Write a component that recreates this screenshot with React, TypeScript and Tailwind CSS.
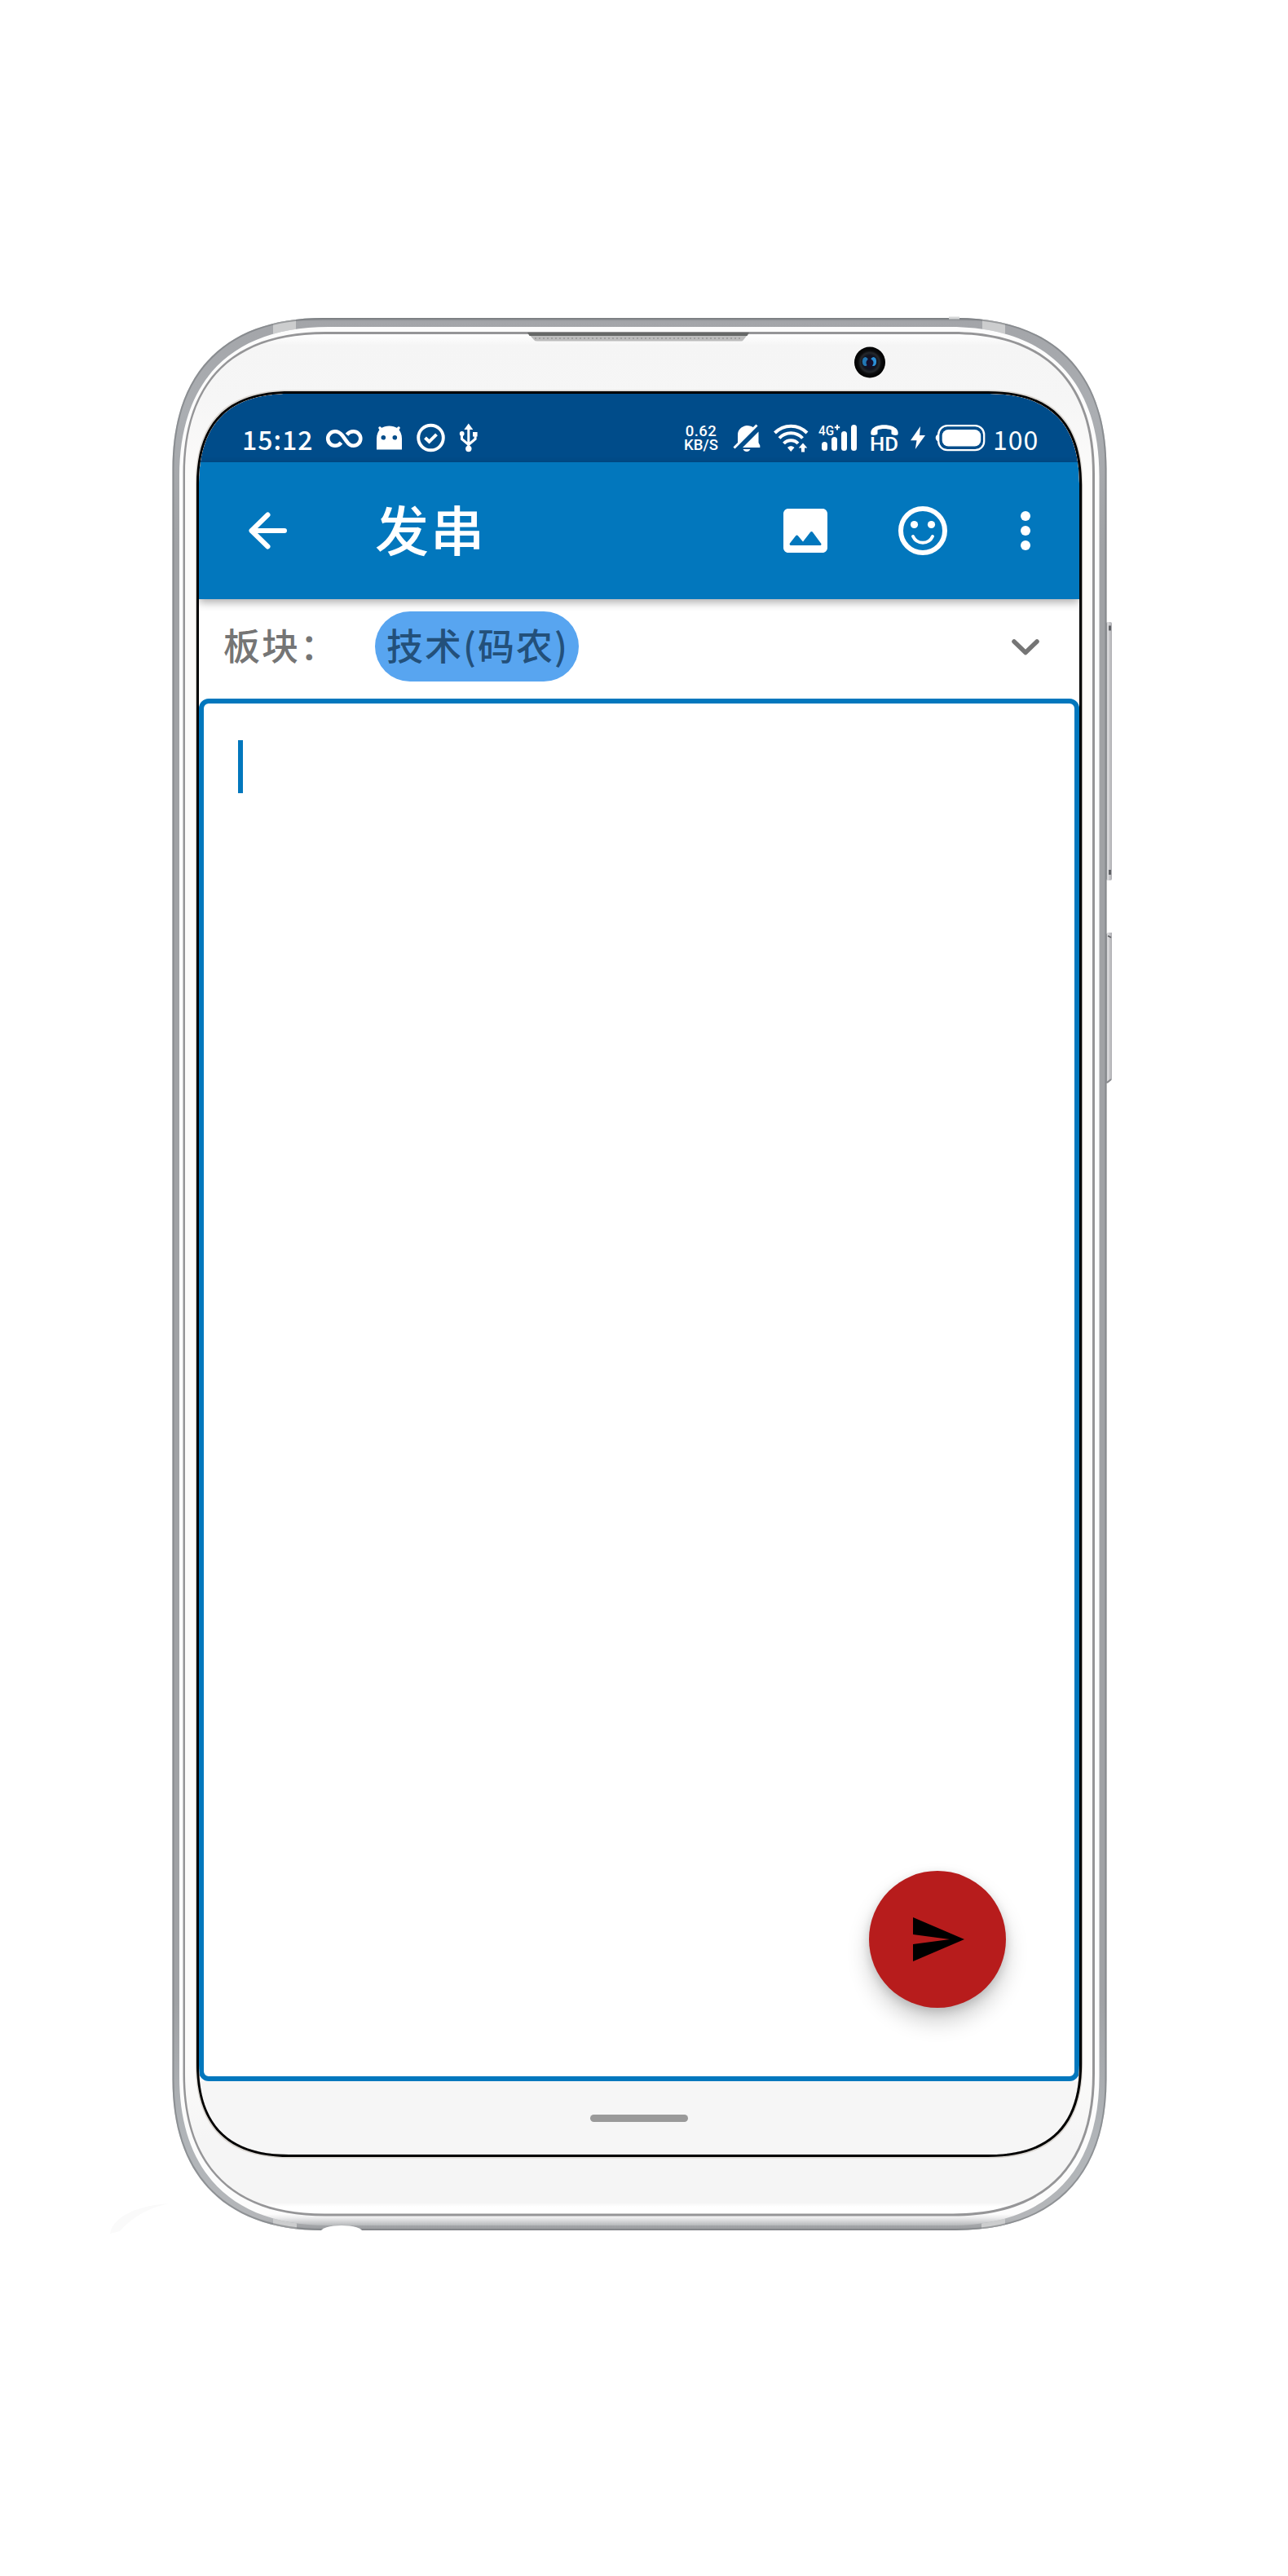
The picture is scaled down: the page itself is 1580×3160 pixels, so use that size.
import React from "react";

const cjk = "font-['Noto_Sans_CJK_SC',sans-serif]";

/** Closed rectangle with smooth (continuous-curvature) corners. */
function squircle(x0: number, y0: number, x1: number, y1: number, r: number, k: number) {
  const c = r * (1 - k);
  return (
    `M${x0} ${y0 + r}C${x0} ${y0 + c} ${x0 + c} ${y0} ${x0 + r} ${y0}` +
    `H${x1 - r}C${x1 - c} ${y0} ${x1} ${y0 + c} ${x1} ${y0 + r}` +
    `V${y1 - r}C${x1} ${y1 - c} ${x1 - c} ${y1} ${x1 - r} ${y1}` +
    `H${x0 + r}C${x0 + c} ${y1} ${x0} ${y1 - c} ${x0} ${y1 - r}Z`
  );
}

const OUTER = squircle(211.5, 390, 1357.5, 2736, 185, 0.645);
const RIM = squircle(220, 401, 1348.5, 2730, 183, 0.645);
const LINE = squircle(224.5, 407, 1343, 2718.5, 175, 0.655);
const FACE = squircle(227, 410, 1340, 2715.5, 171, 0.655);
const GLASS = squircle(239.8, 478.5, 1328.2, 2647.5, 115, 0.67);
const BEZEL = squircle(241, 480, 1327.2, 2646, 115, 0.67);
const SCREEN = squircle(244, 483, 1324, 2643, 110, 0.665);

function PhoneFrame() {
  return (
    <svg className="pointer-events-none absolute inset-0" width="1580" height="3160" viewBox="0 0 1580 3160" aria-hidden="true">
      <defs>
        <linearGradient id="metal" gradientUnits="userSpaceOnUse" x1="0" y1="390" x2="0" y2="2736">
          <stop offset="0" stopColor="#7f8387" />
          <stop offset="0.0018" stopColor="#a3a5a9" />
          <stop offset="0.05" stopColor="#abaeb2" />
          <stop offset="0.12" stopColor="#a0a2a5" />
          <stop offset="0.88" stopColor="#a0a2a5" />
          <stop offset="0.95" stopColor="#b0b4b8" />
          <stop offset="0.994" stopColor="#b4b6b9" />
          <stop offset="1" stopColor="#97999c" />
        </linearGradient>
        <linearGradient id="rim" gradientUnits="userSpaceOnUse" x1="0" y1="2716" x2="0" y2="2730">
          <stop offset="0" stopColor="#fcfcfc" />
          <stop offset="0.35" stopColor="#ebebec" />
          <stop offset="1" stopColor="#b6b8ba" />
        </linearGradient>
        <linearGradient id="face" gradientUnits="userSpaceOnUse" x1="0" y1="410" x2="0" y2="2716">
          <stop offset="0" stopColor="#ffffff" />
          <stop offset="0.006" stopColor="#f5f5f5" />
          <stop offset="0.035" stopColor="#f6f6f6" />
          <stop offset="0.08" stopColor="#fcfbfa" />
          <stop offset="0.92" stopColor="#fcfbfa" />
          <stop offset="0.96" stopColor="#f5f5f5" />
          <stop offset="0.994" stopColor="#f5f5f5" />
          <stop offset="0.996" stopColor="#ffffff" />
          <stop offset="1" stopColor="#ffffff" />
        </linearGradient>
        <linearGradient id="key" x1="0" y1="0" x2="1" y2="0">
          <stop offset="0" stopColor="#77797d" />
          <stop offset="0.25" stopColor="#e4e4e6" />
          <stop offset="0.6" stopColor="#c3c3c6" />
          <stop offset="1" stopColor="#b0b0b4" />
        </linearGradient>
        <radialGradient id="lens">
          <stop offset="0" stopColor="#150f2c" />
          <stop offset="0.45" stopColor="#10131f" />
          <stop offset="0.62" stopColor="#25282c" />
          <stop offset="0.75" stopColor="#0b0c0e" />
          <stop offset="1" stopColor="#000000" />
        </radialGradient>
        <clipPath id="metalClip">
          <path d={OUTER + RIM} clipRule="evenodd" />
        </clipPath>
      </defs>

      {/* side keys */}
      <rect x="1357" y="763" width="7" height="317" rx="2" fill="url(#key)" />
      <path d="M1360 767.500h3v6h-3zM1360 1067h3v6h-3z" fill="#606266" />
      <path d="M1357 1146l2-2h5v180l-5 5h-2z" fill="url(#key)" />
      <path d="M1359 1148l4 2" stroke="#5c5e62" strokeWidth="1.500" />
      <path d="M1358 1328l5-4" stroke="#88898c" strokeWidth="2" />

      {/* metal body with antenna bands */}
      <path d={OUTER + SCREEN} fillRule="evenodd" fill="url(#metal)" />
      <g clipPath="url(#metalClip)">
        <path d="M335 385h28v40h-28zM1205 385h28v40h-28zM335 2700h29v40h-29zM1204 2700h29v40h-29z" fill="#cccdce" />
        <path d={OUTER} fill="none" stroke="#77797d" strokeWidth="4" opacity="0.6" />
      </g>
      <path d={RIM + SCREEN} fillRule="evenodd" fill="url(#rim)" />
      <path d={LINE + SCREEN} fillRule="evenodd" fill="#959597" />
      <path d={FACE + SCREEN} fillRule="evenodd" fill="url(#face)" />
      <path d={GLASS + SCREEN} fillRule="evenodd" fill="#d9d5d0" />
      <path d={BEZEL + SCREEN} fillRule="evenodd" fill="#000" />
      <path d="M1164 388.500h13v3h-13z" fill="#d5d6d7" />
      <ellipse cx="419" cy="2738" rx="26" ry="8" fill="#fff" />
      <path d="M135 2740c4-20 30-34 72-37-26 6-44 16-60 34z" fill="#fafafa" />

      {/* earpiece */}
      <path d="M647 408H919L912 417Q911 418.500 909 418.500H659Q656 418.500 655 417Z" fill="#bdbdbd" />
      <path d="M647 408H919L916.500 412H649.500Z" fill="#666867" />
      <path d="M656 415H911" stroke="#a1a1a1" strokeWidth="2" strokeDasharray="2 3" />

      {/* front camera */}
      <circle cx="1067" cy="444.500" r="19" fill="url(#lens)" />
      <ellipse cx="1061.500" cy="443.500" rx="3.600" ry="5.500" fill="#2277b4" />
      <ellipse cx="1071.500" cy="443.500" rx="3.600" ry="5.500" fill="#2b8fd6" />
      <circle cx="1067" cy="445" r="4.500" fill="#140f2e" />
    </svg>
  );
}

function StatusLeftIcons() {
  return (
    <svg className="h-[40px] w-[192px]" viewBox="397 517 192 40" fill="none" stroke="#fff">
      <path
        d="M418.500 543c-2 2.500-4.500 3.800-7.500 3.800a8.800 8.800 0 0 1 0-17.600c4 0 6.500 2 9 5l5.500 7.600c2 3 4.500 5 8 5a8.800 8.800 0 0 0 0-17.600c-3.500 0-6 1.500-8 4"
        strokeWidth="4.600"
      />
      <path d="M466 525l3 4M489 525l-3 4" strokeWidth="3.500" strokeLinecap="round" />
      <path
        fillRule="evenodd"
        stroke="none"
        fill="#fff"
        d="M462 551.500V538c0-5 2-9.500 5-12.500 3-2 7-3 10.500-3s7.500 1 10.500 3c3 3 5 7.500 5 12.500v13.500zM470.300 539.500a2.800 2.800 0 1 0 0-5.600 2.800 2.800 0 0 0 0 5.600zM484.300 539.500a2.800 2.800 0 1 0 0-5.600 2.800 2.800 0 0 0 0 5.600z"
      />
      <circle cx="528.500" cy="537" r="15.300" strokeWidth="3.900" />
      <path d="M521.500 537l5 4.800 9-9" strokeWidth="4" />
      <path d="M574.800 526v25M566.500 533v5.500l8.300 7 8.300-7V533" strokeWidth="3" />
      <path stroke="none" fill="#fff" d="M574.800 519.500l5.500 7.500h-11zM563.800 532a2.900 2.900 0 1 1 5.800 0 2.900 2.900 0 0 1-5.800 0zM580 530h5.600v5.600H580z" />
      <circle cx="574.800" cy="550.500" r="3.700" fill="#fff" stroke="none" />
    </svg>
  );
}

function StatusRightIcons() {
  return (
    <svg className="h-[40px] w-[312px] overflow-visible" viewBox="897 517 312 40" fill="#fff">
      {/* muted bell */}
      <path d="M905 543.500v-10c0-6 4-10.500 11-11.500 3.500 0 6.500 1 8.500 2.800zM911 549l19.500-19.500V543l1.800 3.500v2.500zM911.500 551h9c-1 2-2.500 3-4.500 3s-3.700-1-4.500-3z" />
      <path d="M900.500 549.500L928.500 521.500" stroke="#fff" strokeWidth="3" />
      {/* wifi */}
      <g fill="none" stroke="#fff" strokeWidth="4">
        <path d="M950.500 531a27.500 27.500 0 0 1 39.500 0" />
        <path d="M956 537.500a19.500 19.500 0 0 1 28.500 0" />
        <path d="M961.500 544a12 12 0 0 1 17.500 0" />
      </g>
      <path d="M970.200 554l-4.200-5c2.500-2.400 6-2.400 8.500 0zM985 543.500l5.300 6H987v5h-4v-5h-3.300z" />
      {/* mobile signal */}
      <text x="1004" y="533.500" fontFamily="Roboto, sans-serif" fontSize="16.500" fontWeight="500" textLength="19" lengthAdjust="spacingAndGlyphs">4G</text>
      <path d="M1026 521h2v2.200h2.200v2H1028v2.300h-2v-2.300h-2.200v-2h2.200z" />
      <rect x="1008" y="542" width="7" height="11" rx="3.500" />
      <rect x="1020" y="536" width="7" height="17" rx="3.500" />
      <rect x="1032" y="529" width="7" height="24" rx="3.500" />
      <rect x="1044" y="521" width="7" height="32" rx="3.500" />
      {/* HD voice */}
      <path d="M1068.500 533c-1-5.500 2-8 6-10 6-2.500 14-2.500 20.500 0 4 2 7.500 4.500 6.500 10-1.500 1.500-6.500 1-8-.5v-5c-5.500-2-12-2-17 0v5c-1.500 1.500-6.500 2-8 .5z" />
      <text x="1067" y="552.800" fontFamily="Roboto, sans-serif" fontSize="23.500" fontWeight="500" textLength="35" lengthAdjust="spacingAndGlyphs">HD</text>
      <path d="M1129 523l-12 17.200h7.500l-1.700 10.800L1135 534h-7z" />
      {/* battery */}
      <rect x="1151.200" y="522.200" width="56" height="30" rx="11" fill="none" stroke="#fff" strokeWidth="2.300" />
      <path d="M1151 532.500c-2 .8-3.300 2.500-3.300 4.500s1.300 4 3.300 4.800z" />
      <rect x="1155.700" y="527" width="47.500" height="20.500" rx="7.500" />
    </svg>
  );
}

function StatusBar() {
  return (
    <div className="flex h-[84px] shrink-0 items-start bg-[#004c8a] pt-[34px] pr-[50px] pl-[53px] text-white">
      <span className={`${cjk} w-[100px] text-[32px] leading-[42px] font-medium tracking-[1px]`}>15:12</span>
      <StatusLeftIcons />
      <div className="ml-auto flex items-start">
        <div className="mr-[15px] flex w-[44px] flex-col items-center pt-[4px] font-['Roboto',sans-serif] text-[18.500px] leading-[17px] font-medium whitespace-nowrap">
          <span className="tracking-[0.5px]">0.62</span>
          <span>KB/S</span>
        </div>
        <StatusRightIcons />
        <span className={`${cjk} ml-[9px] w-[56px] text-[32px] leading-[42px] tracking-[1px]`}>100</span>
      </div>
    </div>
  );
}

function AppBar() {
  return (
    <header className="relative flex h-[168px] shrink-0 items-center bg-[#0277bd] pr-[30px] pl-[48px] text-white shadow-[0_4px_10px_rgba(0,0,0,0.32)]">
      <svg className="size-[72px]" viewBox="0 0 72 72" fill="none" stroke="#fff" strokeWidth="6" strokeLinecap="round" strokeLinejoin="round">
        <path d="M57 36H16.500M36.500 16.500L16.500 36l20 19.500" />
      </svg>
      <h1 className={`${cjk} ml-[96px] pb-[8px] text-[66px] leading-[96px] font-medium tracking-[2px]`}>发串</h1>
      <div className="ml-auto flex items-center">
        <svg className="size-[72px]" viewBox="0 0 24 24" fill="#fff">
          <path d="M21 19V5c0-1.100-.9-2-2-2H5c-1.100 0-2 .9-2 2v14c0 1.100.9 2 2 2h14c1.100 0 2-.9 2-2zM8.900 13.980l2.100 2.530 3.100-3.990c.2-.26.6-.26.8.01l3.510 4.680c.25.330.01.8-.4.8H6.020c-.42 0-.65-.48-.39-.81L8.120 14c.19-.26.57-.27.780-.02z" />
        </svg>
        <svg className="ml-[72px] size-[72px]" viewBox="0 0 72 72" fill="none" stroke="#fff">
          <circle cx="36" cy="36" r="27" strokeWidth="6" />
          <circle cx="25.500" cy="28.500" r="4.600" fill="#fff" stroke="none" />
          <circle cx="46.500" cy="28.500" r="4.600" fill="#fff" stroke="none" />
          <path d="M24 43c4.800 10.300 19.200 10.300 24 0" strokeWidth="4" strokeLinecap="round" />
        </svg>
        <svg className="ml-[54px] size-[72px]" viewBox="0 0 24 24" fill="#fff">
          <circle cx="12" cy="6" r="2" />
          <circle cx="12" cy="12" r="2" />
          <circle cx="12" cy="18" r="2" />
        </svg>
      </div>
    </header>
  );
}

function ForumPicker() {
  return (
    <div className={`${cjk} flex h-[122px] shrink-0 items-start pt-[15px] pr-[30px] pl-[30px] text-[45px] leading-[82px] font-medium tracking-[2px]`}>
      <span className="w-[186px] text-[#757575]">板块：</span>
      <span className="flex h-[86px] w-[250px] justify-center rounded-full bg-[#58a5f0] pl-[2px] text-[#23507a]">技术(码农)</span>
      <svg className="mt-[7px] ml-auto size-[72px]" viewBox="0 0 72 72" fill="none" stroke="#757575" strokeWidth="5.500" strokeLinecap="round" strokeLinejoin="round">
        <path d="M22 30l14 13.500 14-13.500" />
      </svg>
    </div>
  );
}

function Editor() {
  return (
    <div className="flex flex-1 flex-col justify-between rounded-[12px] border-[6px] border-[#0277bd] bg-white">
      <div className="mt-[45px] ml-[42px] h-[65px] w-[6px] bg-[#0277bd]" />
      <button
        aria-label="发送"
        className="mr-[84px] mb-[84px] flex size-[168px] items-center justify-center self-end rounded-full bg-[#b71c1c] shadow-[0_16px_28px_rgba(0,0,0,0.2),0_4px_12px_rgba(0,0,0,0.14)]"
      >
        <svg className="size-[72px]" viewBox="0 0 24 24" fill="#000">
          <path d="M2.010 21L23 12 2.010 3 2 10l15 2-15 2z" />
        </svg>
      </button>
    </div>
  );
}

export default function App() {
  return (
    <div className="relative h-[3160px] w-[1580px] overflow-hidden bg-white pt-[483px] pl-[244px]">
      <main className="flex h-[2160px] w-[1080px] flex-col bg-white">
        <StatusBar />
        <AppBar />
        <ForumPicker />
        <Editor />
        <nav className="flex h-[90px] shrink-0 items-center justify-center bg-[#f6f6f6]">
          <div className="h-[9px] w-[120px] rounded-full bg-[#9a9a9a]" />
        </nav>
      </main>
      <PhoneFrame />
    </div>
  );
}
